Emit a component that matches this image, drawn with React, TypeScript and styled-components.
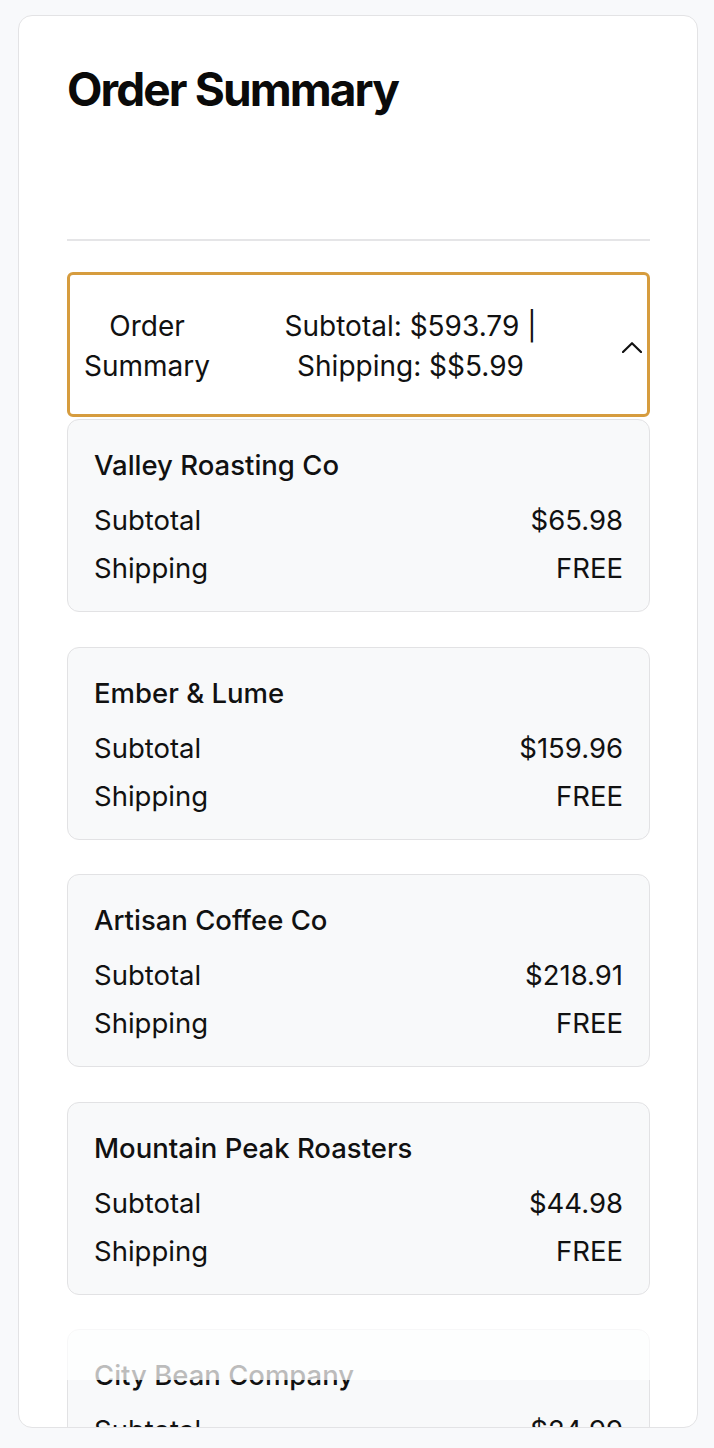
import React from "react";
import styled, { createGlobalStyle } from "styled-components";

const GlobalStyle = createGlobalStyle`
  html, body {
    margin: 0;
    padding: 0;
    background: #f8f9fb;
  }
  body {
    font-family: Inter, "Noto Sans", "Liberation Sans", sans-serif;
    color: #111111;
  }
  * { box-sizing: border-box; }
`;

const Page = styled.div`
  padding: 15px 16px 20px 18px;
  height: 1448px;
`;

const Panel = styled.section`
  position: relative;
  height: 1413px;
  overflow: hidden;
  background: #ffffff;
  border: 1px solid #e3e3e5;
  border-radius: 14px;
  padding: 45px 47px 0 48px;
`;

const Title = styled.h1`
  margin: 0;
  font-family: Inter, "Liberation Sans", sans-serif;
  font-size: 46px;
  line-height: 56px;
  font-weight: 700;
  letter-spacing: -1.9px;
  color: #0a0a0a;
`;

const Divider = styled.hr`
  margin: 122px 0 31px;
  border: none;
  height: 2px;
  background: #e5e5e7;
`;

const AccordionHeader = styled.button`
  width: 100%;
  display: grid;
  grid-template-columns: 128px 1fr 24px;
  align-items: center;
  padding: 31px 3px 28px 13px;
  border: 3px solid #d69c3e;
  border-radius: 6px;
  background: #ffffff;
  font-family: inherit;
  font-size: 28px;
  line-height: 40px;
  color: #111111;
  text-align: center;
  margin-bottom: 2px;
  cursor: pointer;
`;

const HeaderLabel = styled.span`
  display: block;
`;

const HeaderTotals = styled.span`
  display: block;
  padding-right: 10px;
`;

const Chevron = styled.svg`
  justify-self: center;
  width: 20px;
  height: 11px;
  margin-top: 2px;
`;

const VendorList = styled.div`
  display: flex;
  flex-direction: column;
  gap: 34.5px;
`;

const VendorCard = styled.div`
  background: #f8f9fa;
  border: 1px solid #e2e2e4;
  border-radius: 12px;
  padding: 25px 26px 23px;
`;

const VendorName = styled.div`
  font-size: 27.5px;
  line-height: 40px;
  font-weight: 500;
  margin-bottom: 15px;
`;

const Rows = styled.div`
  display: flex;
  flex-direction: column;
  gap: 8px;
`;

const Row = styled.div`
  display: flex;
  justify-content: space-between;
  font-size: 27.5px;
  line-height: 40px;
  font-weight: 400;
`;

const FadeBand = styled.div`
  position: absolute;
  left: 0;
  right: 0;
  top: 1289px;
  height: 75px;
  background: rgba(255, 255, 255, 0.72);
  pointer-events: none;
`;

type Vendor = { name: string; subtotal: string; shipping: string };

const vendors: Vendor[] = [
  { name: "Valley Roasting Co", subtotal: "$65.98", shipping: "FREE" },
  { name: "Ember & Lume", subtotal: "$159.96", shipping: "FREE" },
  { name: "Artisan Coffee Co", subtotal: "$218.91", shipping: "FREE" },
  { name: "Mountain Peak Roasters", subtotal: "$44.98", shipping: "FREE" },
  { name: "City Bean Company", subtotal: "$24.99", shipping: "FREE" },
];

export default function App() {
  return (
    <>
      <GlobalStyle />
      <Page>
        <Panel>
          <Title>Order Summary</Title>
          <Divider />
          <AccordionHeader type="button">
            <HeaderLabel>
              Order
              <br />
              Summary
            </HeaderLabel>
            <HeaderTotals>
              Subtotal: $593.79 |
              <br />
              Shipping: $$5.99
            </HeaderTotals>
            <Chevron viewBox="0 0 20 11" fill="none">
              <polyline
                points="1,10 10,1.2 19,10"
                stroke="#111"
                strokeWidth="2.2"
                strokeLinecap="round"
                strokeLinejoin="round"
              />
            </Chevron>
          </AccordionHeader>
          <VendorList>
            {vendors.map((v) => (
              <VendorCard key={v.name}>
                <VendorName>{v.name}</VendorName>
                <Rows>
                  <Row>
                    <span>Subtotal</span>
                    <span>{v.subtotal}</span>
                  </Row>
                  <Row>
                    <span>Shipping</span>
                    <span>{v.shipping}</span>
                  </Row>
                </Rows>
              </VendorCard>
            ))}
          </VendorList>
          <FadeBand />
        </Panel>
      </Page>
    </>
  );
}
